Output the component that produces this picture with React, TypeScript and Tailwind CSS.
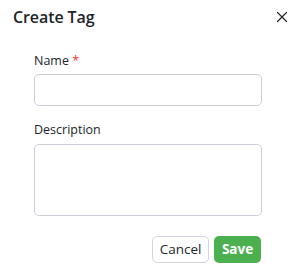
import { X } from 'lucide-react';

export default function App() {
  return (
    <div className="w-[297px] h-[273px] bg-white font-['Open_Sans',sans-serif] text-[#212529]">
      {/* Header */}
      <div className="flex items-center justify-between pl-[13px] pr-[6px] h-[32px] pt-[1px]">
        <h2 className="text-[16px] font-semibold leading-none tracking-[-0.1px]">Create Tag</h2>
        <button className="text-[#212529]" aria-label="Close">
          <X size={18} strokeWidth={1.6} />
        </button>
      </div>

      {/* Form */}
      <div className="pl-[34px] pr-[35px] pt-[20px]">
        <label className="block text-[12.5px] font-medium leading-[18px] mb-[4px]">
          Name <span className="text-[#e53935]">*</span>
        </label>
        <input
          type="text"
          className="block w-full h-[32px] rounded-[5px] border border-[#c9ced6] bg-white px-2 text-[13px] outline-none"
        />

        <label className="block text-[12.5px] font-medium leading-[18px] mt-[15px] mb-[5px]">
          Description
        </label>
        <textarea className="block w-full h-[72px] rounded-[5px] border border-[#c9ced6] bg-white px-2 py-1 text-[13px] outline-none resize-none" />

        <div className="flex justify-end gap-[5px] mt-[20px] pr-[1px]">
          <button className="h-[27px] w-[57px] rounded-[5px] border border-[#d5d3e3] bg-white text-[13.5px] text-[#212529]">
            Cancel
          </button>
          <button className="h-[27px] w-[47px] rounded-[5px] bg-[#4caf50] text-[13.5px] font-bold text-white">
            Save
          </button>
        </div>
      </div>
    </div>
  );
}
